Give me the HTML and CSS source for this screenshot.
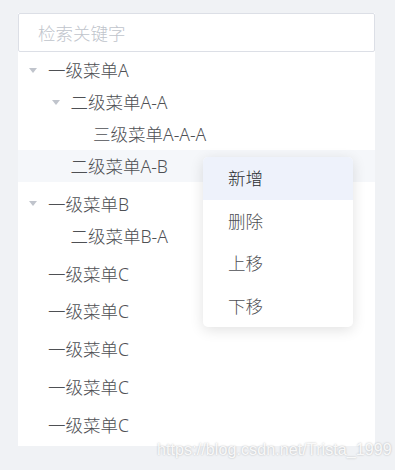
FILE: index.html
```html
<!DOCTYPE html>
<html lang="zh-CN">
<head>
    <meta charset="UTF-8">
    <meta name="viewport" content="width=device-width, initial-scale=1.0">
    <title>树形菜单</title>
    <link rel="stylesheet" href="styles.css">
</head>
<body>
    <div class="panel">
        <input class="search-input" type="text" placeholder="检索关键字">
        <div class="tree">
            <div class="tree-group">
                <div class="tree-row level-1"><span class="caret open"></span><span class="label">一级菜单A</span></div>
                <div class="tree-row level-2"><span class="caret open"></span><span class="label">二级菜单A-A</span></div>
                <div class="tree-row level-3"><span class="caret leaf"></span><span class="label">三级菜单A-A-A</span></div>
                <div class="tree-row level-2 hover"><span class="caret leaf"></span><span class="label">二级菜单A-B</span></div>
            </div>
            <div class="tree-group">
                <div class="tree-row level-1"><span class="caret open"></span><span class="label">一级菜单B</span></div>
                <div class="tree-row level-2"><span class="caret leaf"></span><span class="label">二级菜单B-A</span></div>
            </div>
            <div class="tree-group">
                <div class="tree-row level-1"><span class="caret leaf"></span><span class="label">一级菜单C</span></div>
            </div>
            <div class="tree-group">
                <div class="tree-row level-1"><span class="caret leaf"></span><span class="label">一级菜单C</span></div>
            </div>
            <div class="tree-group">
                <div class="tree-row level-1"><span class="caret leaf"></span><span class="label">一级菜单C</span></div>
            </div>
            <div class="tree-group">
                <div class="tree-row level-1"><span class="caret leaf"></span><span class="label">一级菜单C</span></div>
            </div>
            <div class="tree-group">
                <div class="tree-row level-1"><span class="caret leaf"></span><span class="label">一级菜单C</span></div>
            </div>
        </div>
    </div>

    <ul class="context-menu">
        <li class="menu-item active">新增</li>
        <li class="menu-item">删除</li>
        <li class="menu-item">上移</li>
        <li class="menu-item">下移</li>
    </ul>

    <div class="watermark">https://blog.csdn.net/Trista_1999</div>
</body>
</html>
```

FILE: styles.css
```css
body {
    margin: 0;
    padding: 13px 20px 0 18px;
    background-color: #f0f2f5;
    font-family: "Noto Sans", "Noto Sans CJK SC", sans-serif;
    font-size: 17.5px;
    font-weight: 300;
    color: #4e5054;
    height: 470px;
    box-sizing: border-box;
    overflow: hidden;
}

.panel {
    background-color: #fff;
    width: 357px;
    display: flow-root;
}

.search-input {
    display: block;
    width: 100%;
    height: 39px;
    box-sizing: border-box;
    border: 1px solid #dcdfe6;
    border-radius: 2px;
    padding: 0 19px;
    font-family: inherit;
    font-size: 17.5px;
    font-weight: 300;
    color: #4e5054;
    outline: none;
}

.search-input::placeholder {
    color: #c0c4cc;
}

.tree {
    padding-top: 2px;
}

.tree-group {
    margin-bottom: 5.75px;
}

.tree-row {
    display: flex;
    align-items: center;
    height: 32px;
    white-space: nowrap;
}

.tree-row.hover {
    background-color: #f5f7fa;
}

.level-1 { padding-left: 7.5px; }
.level-2 { padding-left: 30px; }
.level-3 { padding-left: 52.5px; }

.caret {
    width: 15px;
    height: 15px;
    display: flex;
    align-items: center;
    justify-content: center;
    flex-shrink: 0;
}

.caret.open::before {
    content: "";
    width: 0;
    height: 0;
    border-left: 4.5px solid transparent;
    border-right: 4.5px solid transparent;
    border-top: 5.5px solid #c0c4cc;
}

.label {
    padding-left: 7.5px;
    line-height: 32px;
}

.context-menu {
    position: absolute;
    left: 203px;
    top: 157px;
    width: 150px;
    margin: 0;
    padding: 0;
    list-style: none;
    background-color: #fff;
    border-radius: 5px;
    box-shadow: 0 3px 14px rgba(0, 0, 0, 0.12);
    overflow: hidden;
}

.menu-item {
    height: 42.5px;
    line-height: 42.5px;
    padding-left: 25px;
    color: #4e5054;
}

.menu-item.active {
    background-color: #eef2fb;
    color: #2a2c30;
}

.watermark {
    position: absolute;
    left: 157px;
    top: 441px;
    font-family: "Liberation Sans", Arial, sans-serif;
    font-size: 16px;
    font-weight: 400;
    color: rgba(255, 255, 255, 0.9);
    text-shadow: 0 0 2px rgba(0, 0, 0, 0.28);
    letter-spacing: 0.1px;
}
```
